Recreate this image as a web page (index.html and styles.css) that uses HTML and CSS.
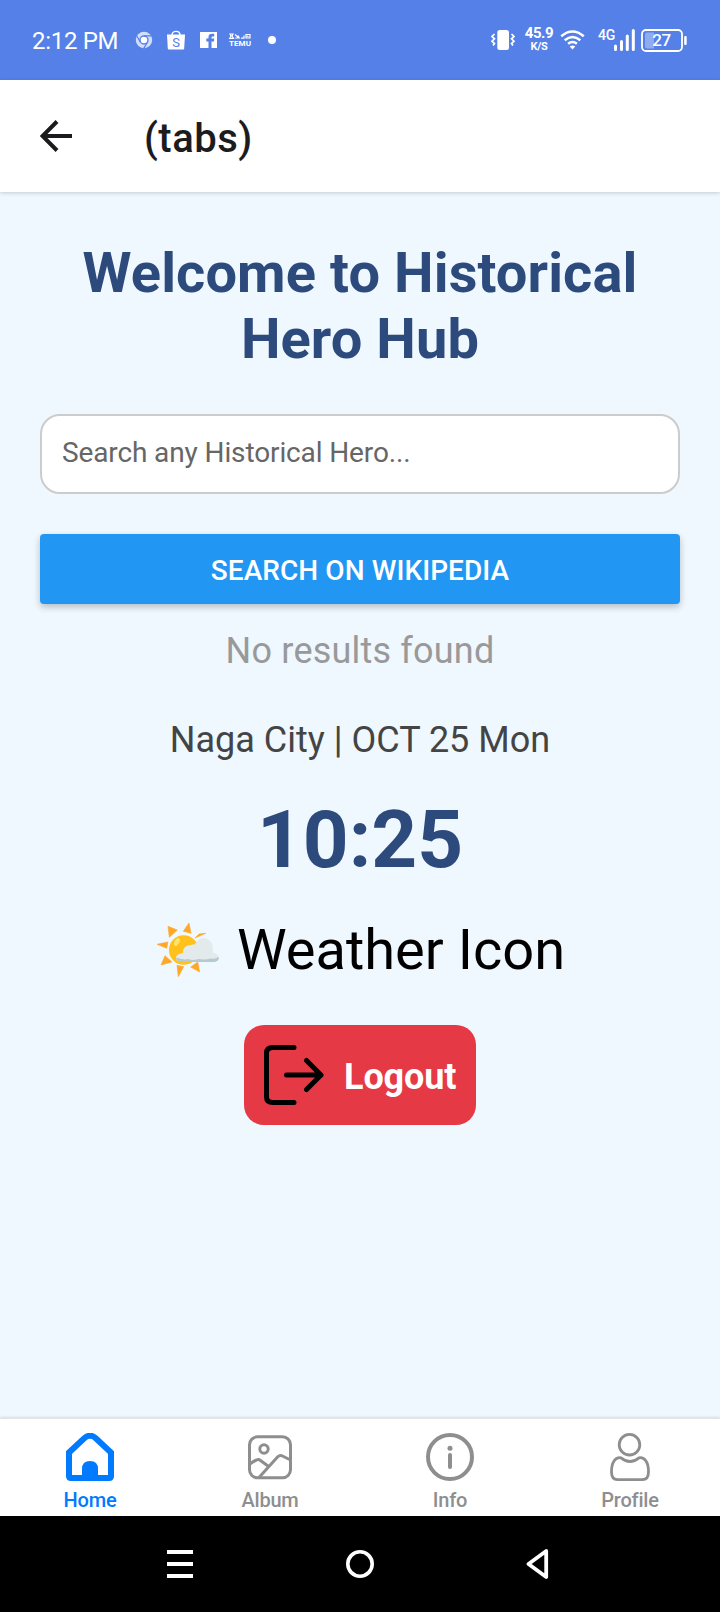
FILE: index.html
```html
<!DOCTYPE html>
<html lang="en">
<head>
<meta charset="utf-8">
<title>Historical Hero Hub</title>
<link rel="stylesheet" href="styles.css">
</head>
<body>
<div class="screen">
  <div class="status">
    <span class="clock">2:12 PM</span>
    <svg class="chrome" width="18" height="18" viewBox="0 0 18 18"><circle cx="9" cy="9" r="8.2" fill="#d3def9"/><circle cx="9" cy="9" r="4" fill="#fff" stroke="#5580e8" stroke-width="1.400"/><path d="M9 4.800h7.600M5.300 11 1.600 4.700M12.600 11 8.800 17.400" stroke="#5580e8" stroke-width="1.200"/></svg>
    <svg class="bag" width="18" height="20" viewBox="0 0 18 20"><path d="M0 4.500h18l-.8 14q-.1 1-1.100 1H1.900q-1 0-1.100-1z" fill="#fff"/><path d="M5 5C5 .2 13 .2 13 5" fill="none" stroke="#fff" stroke-width="1.400"/><text x="9" y="16.500" class="bag-letter">S</text></svg>
    <svg class="facebook" width="17" height="16" viewBox="0 0 17 16"><path d="M0 0h17v16H0z" fill="#fff"/><path d="M8.500 16V9.500H6.300V6.500h2.200V5c0-2.300 1.400-3.300 3.500-3.300h2.200v2.800h-1.400c-.9 0-1.300.3-1.300 1.200v.8h2.600v3h-2.600V16z" fill="#5580e8"/></svg>
    <svg class="temu" width="22" height="18" viewBox="0 -2.500 22 18"><path d="M1 .5h3L3 2.500l1.500 2.300H.8L2 2.600zM6 1l4 3.500M6.200 4.500h4L9 2M12 4.600h3V2M17 1h4v3.500h-4zM18 2.500l1.500.8" fill="none" stroke="#fff" stroke-width="1.200"/><text x="0" y="12.300" textLength="22" lengthAdjust="spacingAndGlyphs" class="temu-name">TEMU</text></svg>
    <span class="dot"></span>
    <svg class="vibrate" width="24" height="20" viewBox="0 0 24 20"><rect x="6.300" y="0" width="11.700" height="20" rx="2.500" fill="#fff"/><path d="M3.500 4 1 6.500l2.500 2.300L1 11.200l2.500 2.300L2 15.500M20.500 4 23 6.500l-2.500 2.300 2.500 2.400-2.500 2.300 1.500 2" fill="none" stroke="#fff" stroke-width="1.700"/></svg>
    <span class="speed"><b>45.9</b><small>K/S</small></span>
    <svg class="wifi" width="25" height="20" viewBox="0 0 25 20"><path d="M1.200 6.300Q12.500-3.300 23.800 6.300M4.700 10.200q7.800-6.500 15.600 0M8.100 13.800q4.400-3.600 8.800 0" fill="none" stroke="#fff" stroke-width="2.500"/><path d="M9.700 16.500q2.800-2 5.600 0l-2.800 3z" fill="#fff"/></svg>
    <span class="network">4G</span>
    <svg class="signal" width="22" height="22" viewBox="0 0 22 22"><path d="M2.500 17v3.500M8.500 12.500v8M14.300 7v13.500M20.300 1.500v19" stroke="#fff" stroke-width="3" stroke-linecap="round"/></svg>
    <svg class="battery" width="47" height="23" viewBox="0 0 47 23"><rect x="1" y="1" width="40" height="21" rx="4" fill="none" stroke="#fff" stroke-width="1.800"/><path d="M6 3.500h7v16H6q-2 0-2-2v-12q0-2 2-2z" fill="#fff" opacity=".35"/><rect x="43.200" y="7" width="2.500" height="9" rx="1" fill="#fff"/><text x="20.500" y="17.300" class="charge">27</text></svg>
  </div>

  <header class="header">
    <svg class="back" width="32" height="32" viewBox="0 0 32 32"><path d="M32 16H3M17 1.500 2.500 16 17 30.500" fill="none" stroke="#1c1c1e" stroke-width="4"/></svg>
    <span class="header-title">(tabs)</span>
  </header>

  <main class="main">
    <h1 class="title">Welcome to Historical<br>Hero Hub</h1>
    <input class="search" type="text" placeholder="Search any Historical Hero...">
    <button class="search-button">SEARCH ON WIKIPEDIA</button>
    <p class="empty">No results found</p>
    <p class="date">Naga City | OCT 25 Mon</p>
    <p class="time">10:25</p>
    <div class="weather">
      <svg width="62" height="54" viewBox="0 0 62 54"><path d="m11 3.300 9.300 3.700-8 7.300zM32 0l2 10.300-7.700-2zM48.700 10.300 38 15l4-4zM0 21.300 11 19l-1.300 6.300zM4 42l4-9.300 7 6.300zM21.300 53.700 20 42.300l6.700 1.400zM42.700 49l-9-5 7-5z" fill="#ffa726" stroke="#ffa726" stroke-width=".6" stroke-linejoin="round"/><circle cx="26.700" cy="27" r="14.700" fill="#ffc11a"/><ellipse cx="20" cy="19" rx="2.300" ry="4.200" transform="rotate(30 20 19)" fill="#ffe36b"/><path d="M19 36q-1-5 7-6 0-8 8-8 3-1 4-.5 2-6 9-6.500 9 1 9 13v4q6 1 6 4 0 2.500-6 2.500H26q-7 0-7-2.500z" fill="#e2eaec"/><path d="M19 34.500q6 2 13-.5 5 3 10 .5 8 2 14-.5 4 .5 6 0 0 5-6 5H26q-7 0-7-4.500z" fill="#b5c9d3"/><path d="M19.500 34q4-3 12-2 5 3 10 0 8 1 14-2 5 0 6 4-3 2.500-8 1.500-6 1.500-12 .5-6 2-10 0-6 1.500-12-2z" fill="#e2eaec"/></svg>
      <span class="weather-label">Weather Icon</span>
    </div>
    <button class="logout">
      <svg width="60" height="60" viewBox="0 0 60 60"><path d="M30 2.500H9Q2.500 2.500 2.500 8v44q0 5.500 6.500 5.500h21M22.500 30H57M42.500 15.500 57 30 42.500 44.500" fill="none" stroke="#000" stroke-width="5" stroke-linecap="round" stroke-linejoin="round"/></svg>
      <span class="logout-label">Logout</span>
    </button>
  </main>

  <nav class="tabs">
    <a class="tab active">
      <svg width="48" height="48" viewBox="0 0 48 48"><path d="M3 19.500 18.500 5Q24 .5 29.500 5L45 19.500V43q0 2-2 2H5q-2 0-2-2z" fill="none" stroke="currentColor" stroke-width="6"/><path d="M16 45V36q0-8 8-8t8 8v9z" fill="currentColor"/></svg>
      <span class="tab-label">Home</span>
    </a>
    <a class="tab">
      <svg width="48" height="48" viewBox="0 0 48 48" fill="none" stroke="currentColor" stroke-width="3"><rect x="3.500" y="3.800" width="41" height="41" rx="8"/><circle cx="18" cy="16" r="4.200"/><path d="M4 31q4-3 6.500-4 2-1 4 .5L22 33M13 44.500 31.500 24q2.500-2.500 5-1l8 4"/></svg>
      <span class="tab-label">Album</span>
    </a>
    <a class="tab">
      <svg width="48" height="48" viewBox="0 0 48 48"><circle cx="24" cy="24" r="22" fill="none" stroke="currentColor" stroke-width="4"/><circle cx="24" cy="15.300" r="2.500" fill="currentColor"/><path d="M24 22v12" stroke="currentColor" stroke-width="4" stroke-linecap="round"/></svg>
      <span class="tab-label">Info</span>
    </a>
    <a class="tab">
      <svg width="48" height="48" viewBox="0 0 48 48" fill="none" stroke="currentColor" stroke-width="2.800"><circle cx="23.500" cy="11.700" r="10.300"/><path d="M15 24.800q9 7.500 18 0c6-1 9.500 5 9.500 14q0 7.800-6 7.800h-25q-6 0-6-7.800c0-9 3.500-15 9.500-14z"/></svg>
      <span class="tab-label">Profile</span>
    </a>
  </nav>

  <div class="system">
    <svg width="28" height="32" viewBox="0 0 28 32"><path d="M1 4h26M1 16h26M1 28h26" stroke="#fff" stroke-width="4"/></svg>
    <svg width="32" height="32" viewBox="0 0 32 32"><circle cx="16" cy="16" r="12.200" fill="none" stroke="#fff" stroke-width="3.600"/></svg>
    <svg width="28" height="32" viewBox="0 0 28 32"><path d="M20.200 3 2.500 16l17.700 13z" fill="none" stroke="#fff" stroke-width="3.800" stroke-linejoin="round"/></svg>
  </div>
</div>
</body>
</html>
```
FILE: styles.css
```css
* { box-sizing: border-box; }
body { margin: 0; font-family: Roboto, sans-serif; }
svg { display: block; flex: none; }
p, h1 { margin: 0; }
button { border: 0; font-family: inherit; }

.screen { display: flex; flex-direction: column; width: 720px; height: 1612px; background: #eff7ff; overflow: hidden; }

.status { display: flex; align-items: center; height: 80px; padding-left: 32px; background: #5580e8; color: #fff; white-space: nowrap; flex: none; }
.clock { width: 103px; padding-top: 2px; font-size: 24px; line-height: 28px; letter-spacing: -.3px; }
.chrome { margin-right: 14px; }
.bag { margin-right: 15px; }
.bag-letter { font-size: 13px; fill: #5580e8; text-anchor: middle; }
.facebook { margin-right: 12px; }
.temu { margin-right: 17px; overflow: visible; }
.temu-name { font-size: 7.500px; font-weight: 700; fill: #fff; }
.dot { width: 8px; height: 8px; margin-right: 215px; border-radius: 50%; background: #fff; }
.vibrate { margin-right: 9px; }
.speed { display: flex; flex-direction: column; align-items: center; width: 30px; margin-right: 6px; padding-bottom: 3px; }
.speed b { font-size: 15px; line-height: 15px; font-weight: 700; letter-spacing: -.4px; }
.speed small { font-size: 11px; line-height: 11px; font-weight: 700; letter-spacing: -.2px; }
.wifi { margin-right: 13px; }
.network { width: 15px; padding-bottom: 11px; font-size: 14px; line-height: 16px; font-weight: 500; letter-spacing: -.3px; }
.signal { margin-right: 6px; }
.charge { font-size: 17px; font-weight: 500; letter-spacing: -.4px; fill: #fff; text-anchor: middle; }

.header { display: flex; align-items: center; height: 112px; padding-left: 40px; background: #fff; box-shadow: 0 1px 4px rgba(0, 0, 0, .18); flex: none; }
.header-title { margin: 5px 0 0 72px; font-size: 40px; line-height: 48px; font-weight: 500; letter-spacing: .5px; color: #1c1c1e; }

.main { display: flex; flex-direction: column; align-items: center; flex: 1; padding: 48px 40px 0; }
.title { font-size: 56px; line-height: 66px; font-weight: 700; letter-spacing: .1px; color: #2d4a7c; text-align: center; white-space: nowrap; }
.search { width: 100%; height: 80px; margin-top: 42px; padding: 0 20px 3px; border: 2px solid #ccc; border-radius: 20px; background: #fff; font-family: inherit; font-size: 28px; letter-spacing: -.12px; }
.search::placeholder { color: #666; opacity: 1; }
.search-button { width: 100%; height: 70px; margin-top: 40px; padding: 3px 0 0; border-radius: 4px; background: #2196f3; box-shadow: 0 3px 7px rgba(0, 0, 0, .24); color: #fff; font-size: 28px; font-weight: 500; letter-spacing: .07px; }
.empty { margin-top: 26px; font-size: 36px; line-height: 42px; letter-spacing: .2px; color: #999; }
.date { margin-top: 47px; font-size: 36px; line-height: 42px; color: #444; }
.time { margin-top: 32px; font-size: 80px; line-height: 94px; font-weight: 700; color: #2d4a7c; }
.weather { display: flex; align-items: center; gap: 18px; margin-top: 30px; padding-left: 2px; }
.weather-label { font-size: 56px; line-height: 66px; color: #000; }
.logout { display: flex; align-items: center; width: 232px; height: 100px; margin-top: 42px; padding: 0 20px; gap: 20px; border-radius: 20px; background: #e63946; }
.logout-label { padding-top: 3px; color: #fff; font-size: 36px; line-height: 42px; font-weight: 700; letter-spacing: -.1px; }

.tabs { display: flex; height: 98px; border-top: 1px solid #e3e5e8; background: #fff; box-shadow: 0 0 3px rgba(0, 0, 0, .2); flex: none; }
.tab { display: flex; flex-direction: column; align-items: center; width: 180px; padding-top: 14px; color: #8e8e8f; }
.tab.active { color: #007aff; }
.tab-label { margin-top: 7px; font-size: 20px; line-height: 24px; font-weight: 500; letter-spacing: -.2px; }

.system { position: relative; display: flex; align-items: center; justify-content: space-between; height: 96px; padding: 0 166px; background: #000; flex: none; }
```
